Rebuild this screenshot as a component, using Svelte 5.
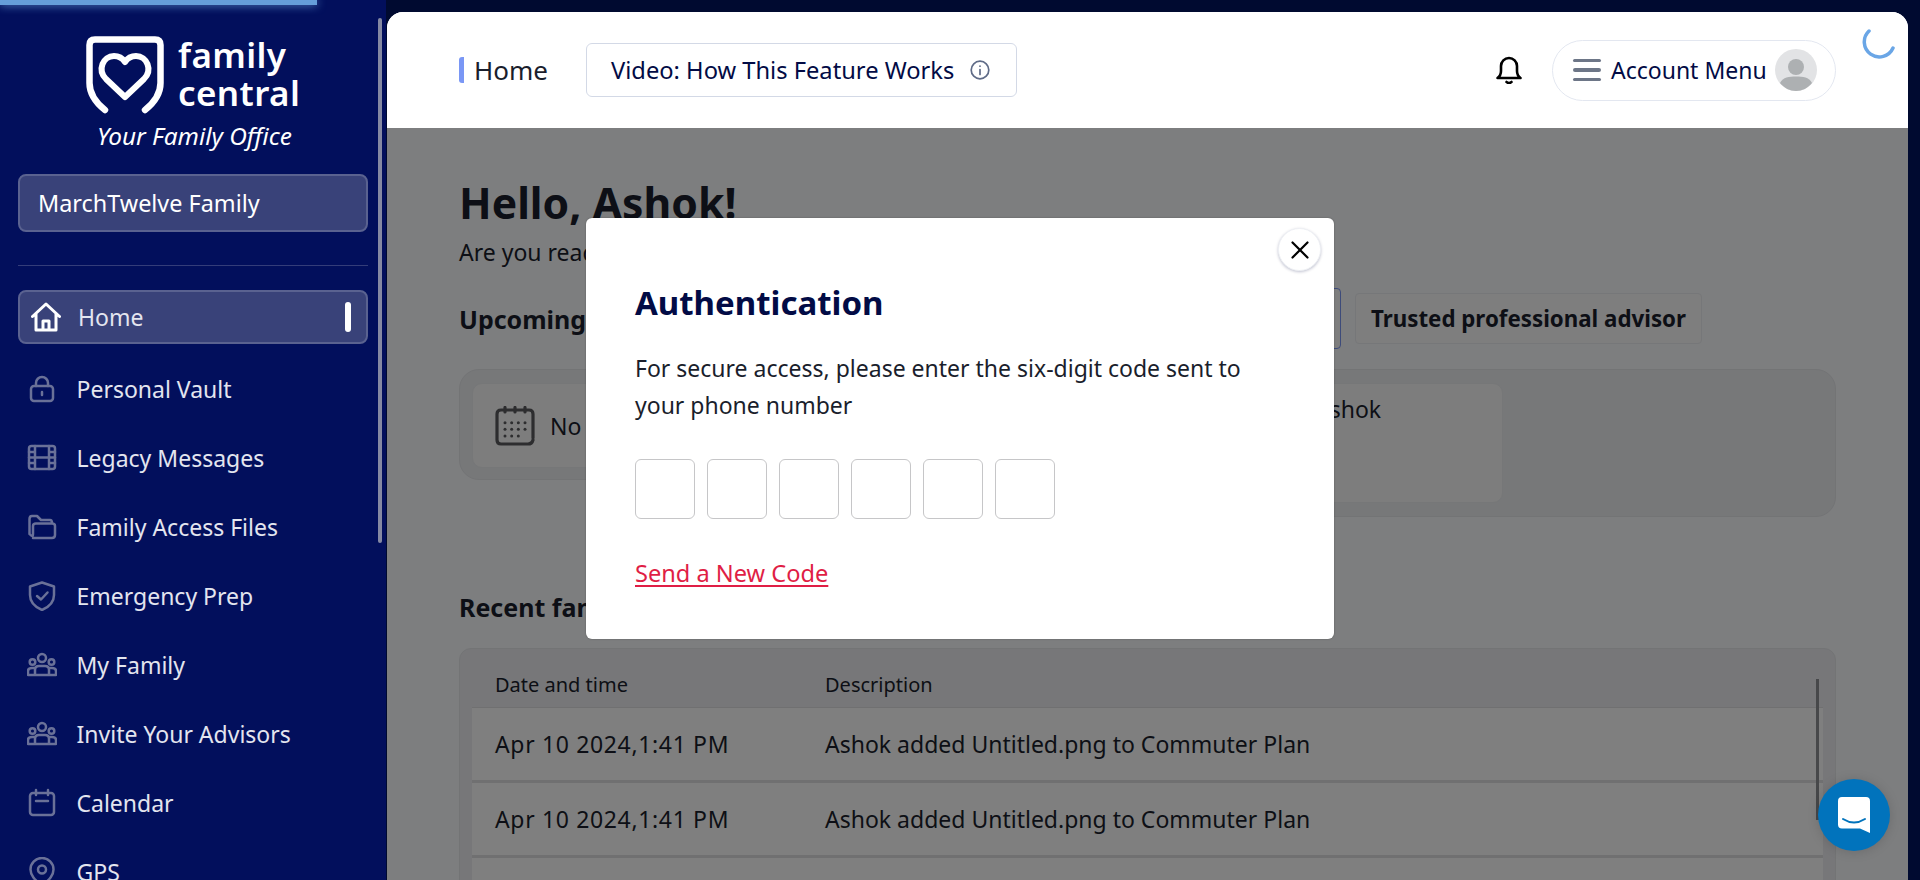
<script>
	const nav = [
		{ label: 'Personal Vault', icon: 'lock' },
		{ label: 'Legacy Messages', icon: 'film' },
		{ label: 'Family Access Files', icon: 'folder' },
		{ label: 'Emergency Prep', icon: 'shield' },
		{ label: 'My Family', icon: 'people' },
		{ label: 'Invite Your Advisors', icon: 'people' },
		{ label: 'Calendar', icon: 'calendar' },
		{ label: 'GPS', icon: 'pin' }
	]
	const activity = [
		{ when: 'Apr 10 2024,1:41 PM', what: 'Ashok added Untitled.png to Commuter Plan' },
		{ when: 'Apr 10 2024,1:41 PM', what: 'Ashok added Untitled.png to Commuter Plan' },
		{ when: 'Apr 10 2024,1:41 PM', what: 'Ashok added Untitled.png to Commuter Plan' }
	]
	const dots = []
	for (let row = 0; row < 3; row++) {
		for (let col = 0; col < (row === 2 ? 3 : 4); col++) dots.push({ x: 10 + col * 6.67, y: 16.7 + row * 6.67 })
	}
</script>

<div class="app">
	<div class="progress"></div>

	<aside class="sidebar">
		<div class="scrollbar"></div>
		<div class="logo">
			<svg class="mark" viewBox="0 0 78 78" fill="none" stroke="#fff" stroke-linecap="round" stroke-linejoin="round">
				<path stroke-width="6.5" d="M19 74 C9 66 3.5 58 3.5 47 V9 Q3.5 3.5 9 3.5 H69 Q74.5 3.5 74.5 9 V47 C74.5 58 69 66 59 74" />
				<path stroke-width="6" d="M39 61 L20 43 C11 34 17 20 28 20 C33 20 37 23 39 26 C41 23 45 20 50 20 C61 20 67 34 58 43 Z" />
			</svg>
			<div class="wordmark">family<br />central</div>
			<div class="tagline">Your Family Office</div>
		</div>

		<div class="family">MarchTwelve Family</div>
		<hr />

		<nav>
			<a class="item active" href="#home">
				<svg viewBox="0 0 30 30" fill="none" stroke="#fff" stroke-width="3" stroke-linejoin="round" stroke-linecap="round">
					<path d="M1.5 14.5 L15 2 L28.5 14.5 M5 12 V28 H25 V12 M12 28 V19 H18 V28" />
				</svg>
				<span>Home</span>
				<i></i>
			</a>
			{#each nav as entry}
				<a class="item" href="#{entry.icon}">
					<svg viewBox="0 0 30 30" fill="none" stroke="#6a7198" stroke-width="2.5" stroke-linejoin="round" stroke-linecap="round">
						{#if entry.icon === 'lock'}
							<rect x="4" y="12" width="22" height="15" rx="3" />
							<path d="M9 12 V9 a6 6 0 0 1 12 0 V12 M15 18 v3" />
						{:else if entry.icon === 'film'}
							<rect x="2" y="3" width="26" height="23" rx="2.5" />
							<path d="M8 3 V26 M22 3 V26 M8 14.5 H22 M2 9 H8 M2 14.5 H8 M2 20 H8 M22 9 H28 M22 14.5 H28 M22 20 H28" />
						{:else if entry.icon === 'folder'}
							<path d="M2.5 22 V7 Q2.5 4 5 4 H10 L14 8 H23 Q25 8 25 11 M6 26 H25 Q28 26 28 23 V14 Q28 11.5 25 11.5 H9 Q6 11.5 6 14 V22 Q6 26 2.5 22" />
						{:else if entry.icon === 'shield'}
							<path d="M15 1.5 L27 5.5 V14 C27 21 22 26 15 29 C8 26 3 21 3 14 V5.5 Z" />
							<path d="M10 15 L14 18.5 L20.5 11.5" />
						{:else if entry.icon === 'people'}
							<circle cx="15" cy="8" r="4" />
							<circle cx="5.5" cy="12" r="2.8" />
							<circle cx="24.5" cy="12" r="2.8" />
							<path d="M1 25 V21 Q1 18 5 18 H8 M29 25 V21 Q29 18 25 18 H22 M8 25 V20 Q8 16 12 16 H18 Q22 16 22 20 V25 M1 25 H29" />
						{:else if entry.icon === 'calendar'}
							<rect x="3" y="5" width="24" height="22" rx="3" />
							<path d="M9 2 V7 M21 2 V7 M9 13 H21" />
						{:else}
							<path d="M15 29 C7 22 3.5 18 3.5 12.5 a11.5 11.5 0 0 1 23 0 C26.5 18 23 22 15 29 Z" />
							<circle cx="15" cy="12.5" r="4" />
						{/if}
					</svg>
					<span>{entry.label}</span>
				</a>
			{/each}
		</nav>
	</aside>

	<main>
		<header>
			<div class="crumb">Home</div>
			<button class="video">
				Video: How This Feature Works
				<svg viewBox="0 0 20 20" fill="none" stroke="#5f6b87" stroke-width="1.7" stroke-linecap="round">
					<circle cx="10" cy="10" r="8.8" />
					<path d="M10 9.5 V14.5 M10 6 V6.2" />
				</svg>
			</button>
			<svg class="bell" viewBox="0 0 26 28" fill="none" stroke="#000" stroke-width="2.6" stroke-linecap="round" stroke-linejoin="round">
				<path d="M1.5 22 Q5 19.5 5 15 V10 a8 8 0 0 1 16 0 V15 Q21 19.5 24.5 22 Z" />
				<path d="M10.5 26 Q13 28 15.5 26" />
			</svg>
			<button class="account">
				<span class="burger"><b></b><b></b><b></b></span>
				Account Menu
				<svg class="avatar" viewBox="0 0 42 42">
					<circle cx="21" cy="21" r="21" fill="#e2e3e5" />
					<circle cx="21" cy="18" r="8" fill="#adb0b2" />
					<path d="M5 34 C8 28 14 27.5 21 27.5 C28 27.5 34 28 37 34 C33 39 27 42 21 42 C15 42 9 39 5 34 Z" fill="#adb0b2" />
				</svg>
			</button>
			<svg class="spinner" viewBox="0 0 34 34" fill="none" stroke="#6aa6e6" stroke-width="3.5" stroke-linecap="round">
				<path d="M7 5 A15 15 0 1 0 31 22" />
			</svg>
		</header>

		<div class="page">
			<h1>Hello, Ashok!</h1>
			<p class="intro">Are you ready to get started?</p>

			<div class="section-row">
				<h2>Upcoming events</h2>
				<div class="tabs">
					<div class="tab selected"></div>
					<div class="tab">Trusted professional advisor</div>
				</div>
			</div>

			<div class="panels">
				<div class="panel small">
					<div class="card empty">
						<svg viewBox="0 0 40 40" fill="none" stroke="#5a5b5e" stroke-width="3.2" stroke-linecap="round" stroke-linejoin="round">
							<path d="M38 32 V8 Q38 4 34 4 H6 Q2 4 2 8 V34 Q2 38 6 38 H33 Q37 38 38 34 M10 1.5 V6 M20 1.5 V6 M30 1.5 V6" />
							{#each dots as dot}
								<circle cx={dot.x} cy={dot.y} r="1.5" fill="#5a5b5e" stroke="none" />
							{/each}
						</svg>
						<span>No upcoming events</span>
					</div>
				</div>
				<div class="panel large">
					<div class="card named">Ashok</div>
				</div>
			</div>

			<h2 class="recent">Recent family activity</h2>

			<div class="table">
				<div class="row head">
					<div>Date and time</div>
					<div>Description</div>
				</div>
				{#each activity as item}
					<div class="row">
						<div class="when">{item.when}</div>
						<div>{item.what}</div>
					</div>
				{/each}
				<div class="table-scroll"></div>
			</div>
		</div>

		<div class="overlay">
			<div class="modal">
				<button class="close" aria-label="Close">
					<svg viewBox="0 0 18 18" fill="none" stroke="#000" stroke-width="2.2" stroke-linecap="round">
						<path d="M1.5 1.5 L16.5 16.5 M16.5 1.5 L1.5 16.5" />
					</svg>
				</button>
				<h3>Authentication</h3>
				<p>For secure access, please enter the six-digit code sent to your phone number</p>
				<div class="code">
					{#each [0, 1, 2, 3, 4, 5] as digit (digit)}
						<input maxlength="1" aria-label="Digit {digit + 1}" />
					{/each}
				</div>
				<a class="resend" href="#resend">Send a New Code</a>
			</div>
		</div>
	</main>

	<button class="chat" aria-label="Chat">
		<svg viewBox="0 0 32 36">
			<path d="M4 0 H28 Q32 0 32 4 V36 L22 31.5 H4 Q0 31.5 0 27.5 V4 Q0 0 4 0 Z" fill="#fff" />
			<path d="M5 22 Q16 29 27 22" fill="none" stroke="#0173bc" stroke-width="2" stroke-linecap="round" />
		</svg>
	</button>
</div>

<style>
	:global(body) {
		margin: 0;
		overflow: hidden;
		background: #000a30;
	}

	.app {
		position: relative;
		display: flex;
		height: 880px;
		overflow: hidden;
		font-family: 'Noto Sans', sans-serif;
		color: #1a1e2c;
	}

	.progress {
		position: absolute;
		left: 0;
		top: 0;
		z-index: 5;
		width: 317px;
		height: 5px;
		background: #659ed9;
		box-shadow: 0 0 10px #659ed9;
	}

	.sidebar {
		position: relative;
		flex: 0 0 386px;
		box-sizing: border-box;
		padding: 36px 18px 0;
		margin-right: 1px;
		background: #020f5c;
		color: #e3e5ef;
		overflow: hidden;
	}

	.scrollbar {
		position: absolute;
		left: 378px;
		top: 18px;
		width: 4px;
		height: 525px;
		border-radius: 2px;
		background: #8589a3;
	}

	.logo {
		display: grid;
		grid-template-columns: 78px auto;
		justify-content: start;
		align-content: start;
		column-gap: 14px;
		padding-left: 68px;
		height: 138px;
		color: #fff;
	}

	.mark {
		width: 78px;
		height: 78px;
	}

	.wordmark {
		font-size: 35px;
		font-weight: 600;
		line-height: 38px;
		letter-spacing: 0.4px;
	}

	.tagline {
		grid-column: 1 / 3;
		margin: 7px 0 0 11px;
		font-size: 24.4px;
		font-style: italic;
		line-height: 30px;
		white-space: nowrap;
	}

	.family {
		box-sizing: border-box;
		height: 58px;
		padding: 0 18px;
		display: flex;
		align-items: center;
		font-size: 23.4px;
		color: #fff;
		background: #394279;
		border: 2px solid #5a6290;
		border-radius: 8px;
	}

	hr {
		margin: 33px 0 24px;
		border: 0;
		border-top: 1px solid #343d79;
	}

	nav {
		display: flex;
		flex-direction: column;
		gap: 21px;
	}

	.item {
		display: flex;
		align-items: center;
		gap: 19.5px;
		height: 48px;
		padding-left: 9px;
		flex-shrink: 0;
		color: #e3e5ef;
		font-size: 23px;
		text-decoration: none;
	}

	.item svg {
		width: 30px;
		height: 30px;
	}

	.item.active {
		box-sizing: border-box;
		height: 54px;
		padding: 0 15px 0 11px;
		gap: 17px;
		background: #394279;
		border: 2px solid #5a6290;
		border-radius: 8px;
	}

	.item.active i {
		width: 6px;
		height: 30px;
		margin-left: auto;
		border-radius: 3px;
		background: #fff;
	}

	main {
		position: relative;
		flex: 0 0 1521px;
		margin-top: 12px;
		background: #fbfcfe;
		border-radius: 16px 16px 0 0;
		overflow: hidden;
	}

	header {
		position: relative;
		display: flex;
		align-items: center;
		box-sizing: border-box;
		height: 116px;
		padding: 0 72px;
		background: #fff;
	}

	.crumb {
		display: flex;
		align-items: center;
		height: 26px;
		padding-left: 10px;
		border-left: 5px solid #7a97f5;
		border-radius: 3px;
		font-size: 26px;
	}

	.video {
		display: flex;
		align-items: center;
		box-sizing: border-box;
		height: 54px;
		margin-left: 38px;
		padding: 0 26px 0 24px;
		gap: 16px;
		background: #fff;
		border: 1.5px solid #d3d9e6;
		border-radius: 6px;
		color: #020b45;
		font: inherit;
		font-size: 23.7px;
	}

	.video svg {
		width: 20px;
		height: 20px;
	}

	.bell {
		width: 26px;
		height: 28px;
		margin-left: auto;
	}

	.account {
		display: flex;
		align-items: center;
		box-sizing: border-box;
		width: 284px;
		height: 61px;
		margin-left: 30px;
		padding: 0 18px 0 20px;
		background: #fff;
		border: 1px solid #e3e7f0;
		border-radius: 31px;
		color: #020b45;
		font: inherit;
		font-size: 23px;
		white-space: nowrap;
	}

	.burger {
		display: flex;
		flex-direction: column;
		gap: 6px;
		width: 28px;
		margin-right: 10px;
	}

	.burger b {
		height: 3.5px;
		border-radius: 2px;
		background: #6d7687;
	}

	.avatar {
		width: 42px;
		height: 42px;
		margin-left: auto;
	}

	.spinner {
		position: absolute;
		left: 1475px;
		top: 14px;
		width: 34px;
		height: 34px;
	}

	.page {
		padding: 50px 72px 0;
		height: 752px;
		box-sizing: border-box;
		overflow: hidden;
	}

	h1 {
		margin: 0;
		font-size: 42.7px;
		line-height: 50px;
		font-weight: 700;
	}

	.intro {
		margin: 9px 0 0;
		font-size: 23px;
		line-height: 30px;
	}

	.section-row {
		display: flex;
		align-items: center;
		margin-top: 21px;
	}

	h2 {
		margin: 0;
		font-size: 25px;
		line-height: 36px;
		font-weight: 700;
	}

	.tabs {
		display: flex;
		align-items: center;
		margin-left: auto;
		margin-right: 134px;
		gap: 14px;
	}

	.tab {
		display: flex;
		align-items: center;
		box-sizing: border-box;
		height: 51px;
		padding: 0 15px;
		background: #fcfcfc;
		border: 1px solid #eceef2;
		border-radius: 4px;
		font-size: 22.3px;
		font-weight: 700;
	}

	.tab.selected {
		width: 340px;
		height: 61px;
		border-color: #7a97f5;
	}

	.panels {
		display: grid;
		grid-template-columns: 520px 1fr;
		align-items: start;
		gap: 20px;
		margin-top: 20px;
	}

	.panel {
		box-sizing: border-box;
		background: #eef0f3;
		border: 1px solid #e6e8eb;
		border-radius: 20px;
	}

	.panel.small {
		height: 111px;
		padding: 13px 12px;
	}

	.panel.large {
		height: 148px;
		padding: 13px 332px 0 0;
	}

	.card {
		box-sizing: border-box;
		background: #fbfbfb;
		border: 1px solid #eceef0;
		border-radius: 10px;
		font-size: 23px;
	}

	.empty {
		display: flex;
		align-items: center;
		gap: 15px;
		height: 85px;
		padding-left: 22px;
	}

	.empty svg {
		width: 40px;
		height: 40px;
	}

	.named {
		height: 120px;
		margin-left: 276px;
		padding: 10px 0 0 38px;
		line-height: 30px;
	}

	.recent {
		margin-top: 72px;
	}

	.table {
		position: relative;
		box-sizing: border-box;
		height: 400px;
		margin: 23px 0 0;
		padding: 0 12px;
		background: #eeeff2;
		border: 1px solid #e6e8eb;
		border-radius: 12px;
		overflow: hidden;
	}

	.row {
		display: grid;
		grid-template-columns: 330px 1fr;
		align-items: center;
		height: 75px;
		box-sizing: border-box;
		padding-left: 23px;
		background: #fefefe;
		border-bottom: 3px solid #e0e1e3;
		font-size: 23px;
	}

	.row .when {
		letter-spacing: 0.65px;
	}

	.row.head {
		height: 59px;
		padding-top: 13px;
		background: none;
		border-bottom: 1px solid #e0e1e3;
		font-size: 20px;
	}

	.table-scroll {
		position: absolute;
		left: 1356px;
		top: 30px;
		width: 3px;
		height: 141px;
		background: #8f9094;
	}

	.overlay {
		position: absolute;
		left: 0;
		right: 0;
		top: 116px;
		bottom: 0;
		background: rgba(0, 0, 0, 0.5);
	}

	.modal {
		position: absolute;
		left: 199px;
		top: 90px;
		box-sizing: border-box;
		width: 748px;
		height: 421px;
		padding: 63px 49px 0;
		background: #fff;
		border-radius: 6px;
		box-shadow: 0 0 2px rgba(0, 0, 0, 0.3);
		color: #1a1e2c;
	}

	.close {
		position: absolute;
		right: 13px;
		top: 10px;
		display: flex;
		align-items: center;
		justify-content: center;
		width: 43px;
		height: 43px;
		padding: 0;
		background: #fff;
		border: 1px solid #eef0f4;
		border-radius: 50%;
		box-shadow: 0 1px 3px rgba(2, 11, 69, 0.25);
	}

	.close svg {
		width: 18px;
		height: 18px;
	}

	h3 {
		margin: 0;
		font-size: 33px;
		line-height: 44px;
		font-weight: 700;
		color: #020b45;
	}

	.modal p {
		margin: 25px 0 0;
		font-size: 23px;
		line-height: 37px;
		width: 640px;
	}

	.code {
		display: flex;
		gap: 12px;
		margin-top: 35px;
	}

	.code input {
		box-sizing: border-box;
		width: 60px;
		height: 60px;
		padding: 0;
		background: #fff;
		border: 1px solid #c6c6c8;
		border-radius: 6px;
	}

	.resend {
		display: inline-block;
		margin-top: 39px;
		font-size: 23.6px;
		line-height: 30px;
		color: #e01e45;
		text-decoration: underline;
		text-underline-offset: 3px;
	}

	.chat {
		position: absolute;
		left: 1818px;
		top: 779px;
		z-index: 4;
		display: flex;
		align-items: center;
		justify-content: center;
		width: 72px;
		height: 72px;
		padding: 0;
		background: #0173bc;
		border: 0;
		border-radius: 50%;
		box-shadow: 0 1px 12px rgba(0, 0, 0, 0.15);
	}

	.chat svg {
		width: 32px;
		height: 36px;
	}
</style>
